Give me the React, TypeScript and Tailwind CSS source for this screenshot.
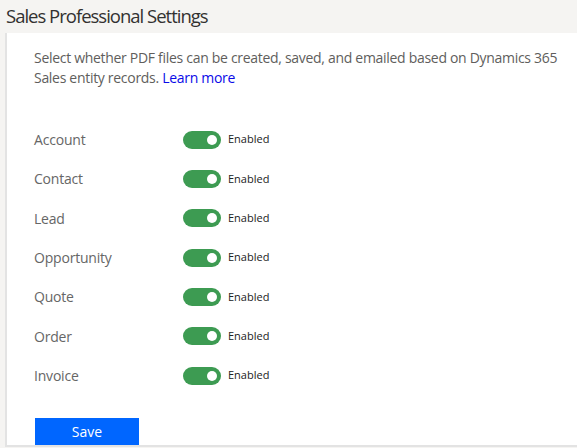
import React from 'react';

const ENTITIES = ['Account', 'Contact', 'Lead', 'Opportunity', 'Quote', 'Order', 'Invoice'];

function Toggle() {
  return (
    <div className="flex items-center">
      <div className="relative w-[38px] h-[18px] rounded-full bg-[#3d9b52]">
        <span className="absolute right-[4px] top-[4px] w-[10px] h-[10px] rounded-full bg-white" />
      </div>
      <span className="ml-[7px] text-[11px] text-[#222]">Enabled</span>
    </div>
  );
}

export default function App() {
  return (
    <div
      className="w-[577px] h-[448px] overflow-hidden bg-[#f5f4f2] flex flex-col"
      style={{ fontFamily: '"Open Sans", "Noto Sans", sans-serif' }}
    >
      <h1 className="h-[33px] pl-[6px] pt-[2px] text-[18.5px] leading-[28px] tracking-[-1px] text-[#323130]">
        Sales Professional Settings
      </h1>
      <div className="ml-[5px] h-[414px] bg-white border-l-2 border-b-2 border-[#e3e3e3] pl-[27px] pt-[15px] flex flex-col">
        <p className="text-[14px] leading-[20px] tracking-[-0.3px] text-[#605e5c]">
          Select whether PDF files can be created, saved, and emailed based on Dynamics 365
          <br />
          Sales entity records. <a className="text-[#0a0ae8]">Learn more</a>
        </p>
        <div className="mt-[32px] flex flex-col">
          {ENTITIES.map((name) => (
            <div key={name} className="h-[39.33px] flex items-center">
              <span className="w-[149px] text-[14px] tracking-[-0.2px] text-[#666]">{name}</span>
              <Toggle />
            </div>
          ))}
        </div>
        <button className="mt-[23px] ml-[1px] w-[104px] h-[30px] bg-[#0066ff] text-white text-[14px]">
          Save
        </button>
      </div>
    </div>
  );
}
